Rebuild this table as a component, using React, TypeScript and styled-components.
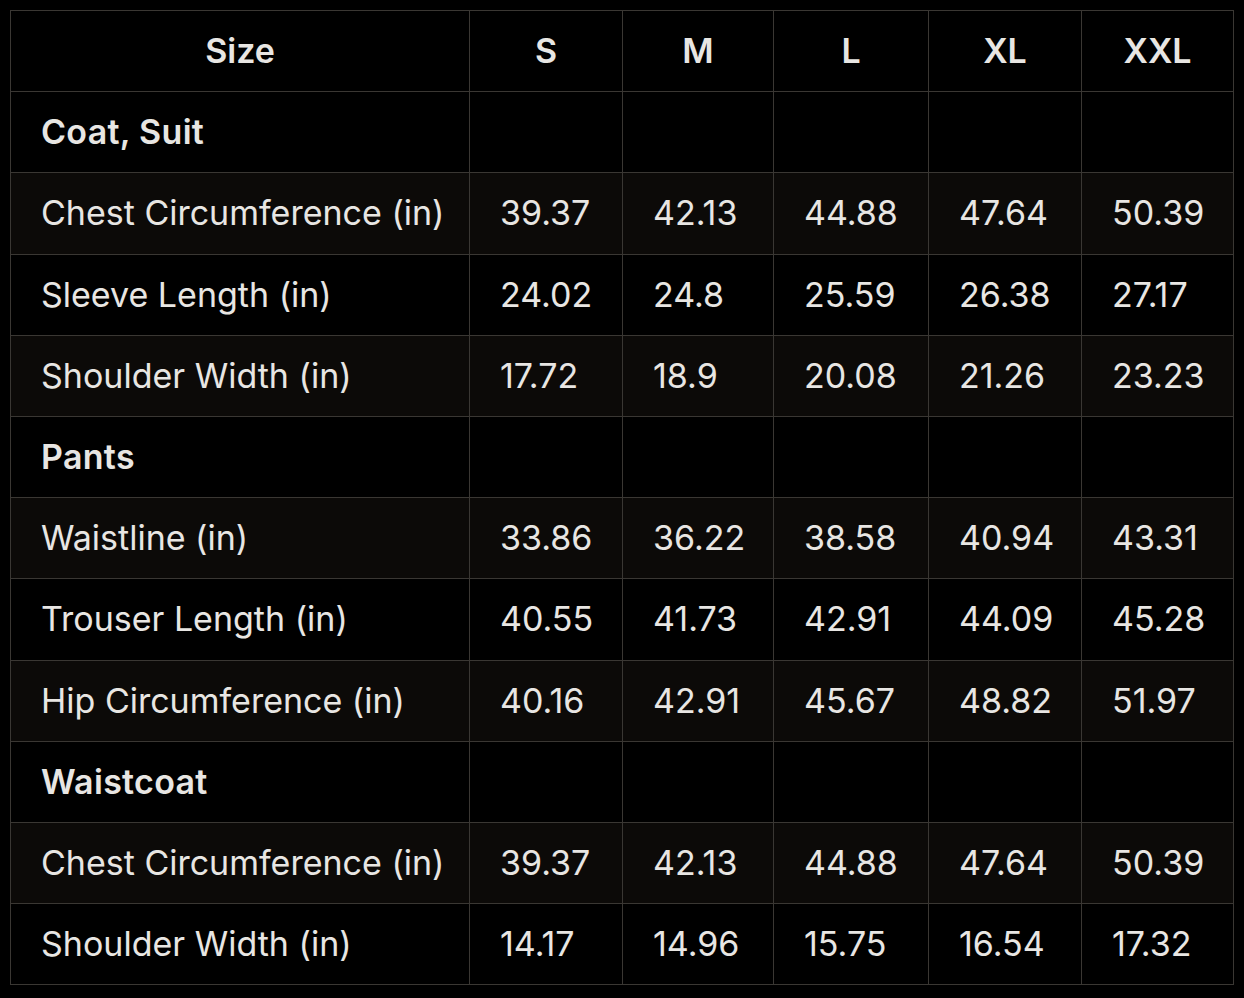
import React from "react";
import styled, { createGlobalStyle } from "styled-components";

const Global = createGlobalStyle`
  html, body { margin: 0; padding: 0; background: #000; }
  body { font-family: Inter, "Open Sans", "Liberation Sans", sans-serif; color: #e8e6e3; }
`;

const Page = styled.div`
  padding: 10px;
  background: #000;
  min-height: 998px;
  box-sizing: border-box;
`;

const Table = styled.table`
  border-collapse: collapse;
  table-layout: fixed;
  width: 1224px;
  font-size: 34px;
  line-height: 40.2px;
`;

const HeadCell = styled.th`
  border: 1px solid #3a3733;
  padding: 20px 30px;
  text-align: center;
  font-weight: 600;
  background: #000;
`;

const Row = styled.tr<{ $striped: boolean }>`
  background: ${(p) => (p.$striped ? "#0c0a08" : "#000")};
`;

const Cell = styled.td<{ $bold?: boolean }>`
  border: 1px solid #3a3733;
  padding: 20px 30px;
  text-align: left;
  font-weight: ${(p) => (p.$bold ? 600 : 400)};
  letter-spacing: ${(p) => (p.$bold ? "0.3px" : "0")};
  white-space: nowrap;
`;

const headers = ["Size", "S", "M", "L", "XL", "XXL"];
const widths = [459, 153, 151, 155, 153, 152];

type R = { label: string; values?: string[] };

const rows: R[] = [
  { label: "Coat, Suit" },
  { label: "Chest Circumference (in)", values: ["39.37", "42.13", "44.88", "47.64", "50.39"] },
  { label: "Sleeve Length (in)", values: ["24.02", "24.8", "25.59", "26.38", "27.17"] },
  { label: "Shoulder Width (in)", values: ["17.72", "18.9", "20.08", "21.26", "23.23"] },
  { label: "Pants" },
  { label: "Waistline (in)", values: ["33.86", "36.22", "38.58", "40.94", "43.31"] },
  { label: "Trouser Length (in)", values: ["40.55", "41.73", "42.91", "44.09", "45.28"] },
  { label: "Hip Circumference (in)", values: ["40.16", "42.91", "45.67", "48.82", "51.97"] },
  { label: "Waistcoat" },
  { label: "Chest Circumference (in)", values: ["39.37", "42.13", "44.88", "47.64", "50.39"] },
  { label: "Shoulder Width (in)", values: ["14.17", "14.96", "15.75", "16.54", "17.32"] },
];

export default function App() {
  return (
    <Page>
      <Global />
      <Table>
        <colgroup>
          {widths.map((w, i) => (
            <col key={i} style={{ width: w }} />
          ))}
        </colgroup>
        <thead>
          <tr>
            {headers.map((h) => (
              <HeadCell key={h}>{h}</HeadCell>
            ))}
          </tr>
        </thead>
        <tbody>
          {rows.map((r, i) => (
            <Row key={i} $striped={i % 2 === 1}>
              <Cell $bold={!r.values}>{r.label}</Cell>
              {(r.values ?? ["", "", "", "", ""]).map((v, j) => (
                <Cell key={j}>{v}</Cell>
              ))}
            </Row>
          ))}
        </tbody>
      </Table>
    </Page>
  );
}
